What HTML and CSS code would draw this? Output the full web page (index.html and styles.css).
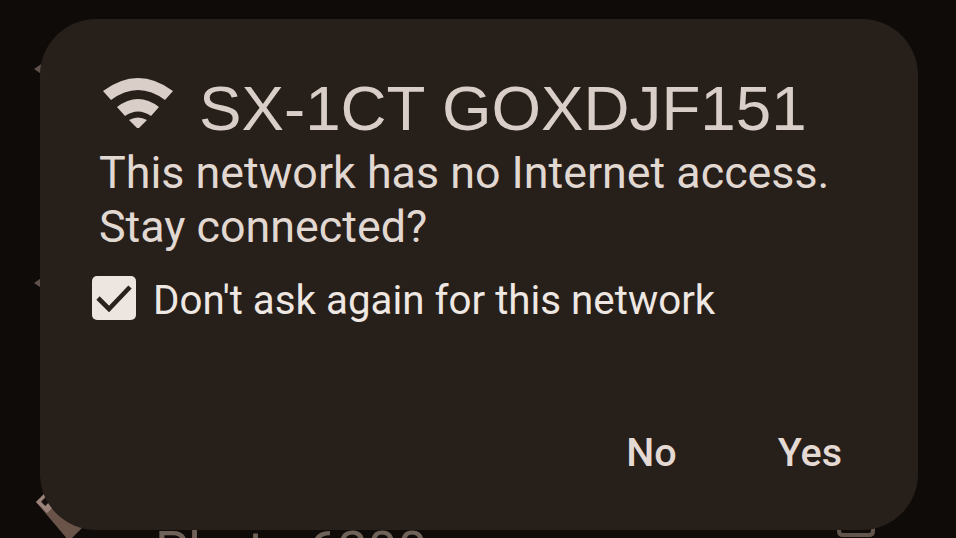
FILE: index.html
```html
<!DOCTYPE html>
<html lang="en">
<head>
<meta charset="utf-8">
<title>Network dialog</title>
<link rel="stylesheet" href="styles.css">
</head>
<body>
<div class="backdrop">
  <span class="peek peek-top"></span>
  <span class="peek peek-mid"></span>
  <svg class="peek-tag" width="50" height="50" viewBox="0 0 50 50"><path d="M3 11 14 0 50 36 36 50Z" fill="#6a544a"/><path d="M3 11 14 0 25 11 14 22Z" fill="#9b8379"/><rect x="9" y="7" width="8" height="6" transform="rotate(-45 13 10)" fill="#17110e"/></svg>
  <span class="peek-text">Photo 6200</span>
  <svg class="peek-corner" width="40" height="12" viewBox="0 0 40 12"><path d="M3 0V5Q3 9 7 9H33Q37 9 37 5V0" fill="none" stroke="#61554c" stroke-width="4"/></svg>
  <section class="dialog">
    <h1 class="title">
      <svg class="wifi" width="72" height="52" viewBox="0 0 72 52"><path d="M1 15Q36-11 71 15L63 24Q36 4 9 24Z" fill="#d9cec8"/><path d="M15 31Q36 15 57 31L49 40Q36 31 23 40Z" fill="#d9cec8"/><path d="M27 44Q36 39 45 44L36 53Z" fill="#d9cec8"/></svg>
      <span>SX-1CT GOXDJF151</span>
    </h1>
    <p class="message">This network has no Internet access.<br>Stay connected?</p>
    <label class="option">
      <span class="box"><svg width="36" height="28" viewBox="0 0 36 28"><path d="M2 14 13 25 34 3" fill="none" stroke="#2a221c" stroke-width="4.6"/></svg></span>
      <span class="option-text">Don't ask again for this network</span>
    </label>
    <div class="actions">
      <span class="action">No</span>
      <span class="action">Yes</span>
    </div>
  </section>
</div>
</body>
</html>
```
FILE: styles.css
```css
* { box-sizing: border-box; }
html, body { margin: 0; height: 100%; }
body { background: #0e0b09; overflow: hidden; }
.backdrop { position: relative; width: 956px; height: 538px; padding: 19px 38px 8px 40px; overflow: hidden; }
.dialog {
  position: relative;
  height: 511px;
  background: #271f1a;
  border-radius: 56px;
  padding: 52px 0 0 52px;
  display: flex;
  flex-direction: column;
  font-family: Roboto, sans-serif;
}
.title {
  margin: 0;
  display: flex;
  align-items: center;
  gap: 25px;
  padding-left: 10px;
  height: 74px;
  font: 400 63.7px/74px "Liberation Sans", Arial, sans-serif;
  color: #d9cec8;
  white-space: nowrap;
}
.wifi { flex: none; margin-top: -12px; }
.message {
  margin: 1px 0 0 7px;
  font-size: 44.8px;
  line-height: 54px;
  color: #e2d8d2;
  white-space: nowrap;
}
.option {
  display: flex;
  align-items: center;
  gap: 18px;
  margin-top: 21px;
  font-size: 40.3px;
  line-height: 46px;
  color: #efe7e2;
  white-space: nowrap;
}
.option-text { position: relative; top: 3px; left: -1px; }
.box {
  flex: none;
  width: 44px;
  height: 44px;
  border-radius: 5px;
  background: #ece5e0;
  display: flex;
  align-items: center;
  justify-content: center;
}
.actions {
  margin-top: auto;
  display: flex;
  justify-content: flex-end;
  gap: 101px;
  padding: 0 76px 55px 0;
  font-size: 39.5px;
  font-weight: 500;
  line-height: 44px;
  color: #e4d9d3;
}
.peek { position: absolute; left: 34px; width: 16px; height: 22px; background: #5f504a; clip-path: polygon(0 50%, 100% 0, 100% 100%); }
.peek-top { top: 58px; }
.peek-mid { top: 272px; }
.peek-tag { position: absolute; left: 33px; top: 491px; }
.peek-text { position: absolute; left: 155px; top: 520px; font: 53px/62px Roboto, sans-serif; color: #6f6259; white-space: nowrap; }
.peek-corner { position: absolute; left: 836px; top: 526px; }
```
